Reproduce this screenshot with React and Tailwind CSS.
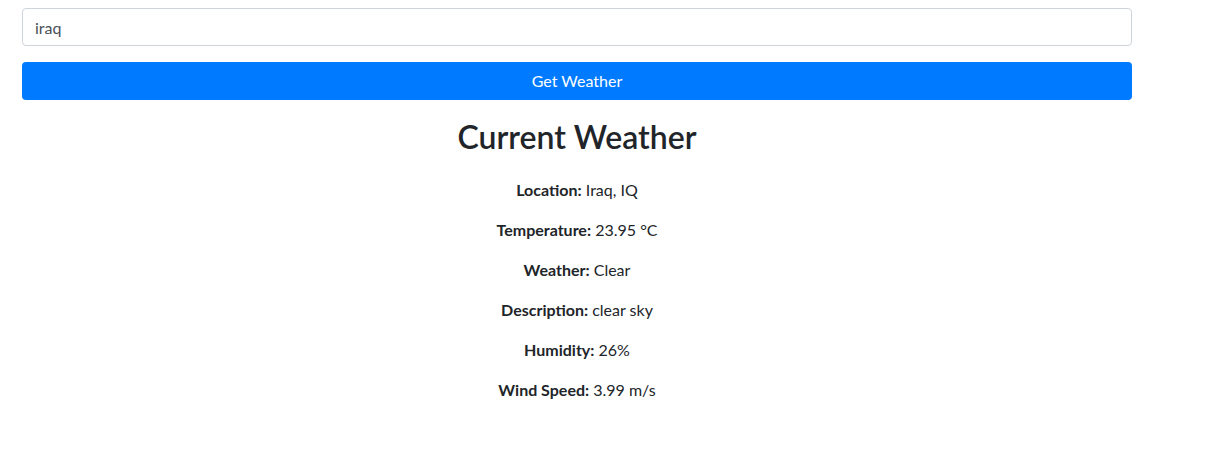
import React from 'react';

const rows = [
  ['Location:', 'Iraq, IQ'],
  ['Temperature:', '23.95 °C'],
  ['Weather:', 'Clear'],
  ['Description:', 'clear sky'],
  ['Humidity:', '26%'],
  ['Wind Speed:', '3.99 m/s'],
];

const App = () => {
  return (
    <div className="min-h-[467px] bg-white text-[#212529] font-['Lato',sans-serif]">
      <div className="ml-[22px] w-[1110px] pt-2">
        <input
          defaultValue="iraq"
          className="block h-[38px] w-full rounded border border-[#ced4da] px-3 text-base text-[#495057] outline-none"
        />
        <button className="mt-4 block h-[38px] w-full rounded bg-[#007bff] text-base text-white">
          Get Weather
        </button>
        <div className="mt-[18px] text-center">
          <h2 className="h-[38px] text-[32px] leading-[38px] font-semibold">Current Weather</h2>
          <div className="mt-[22px]">
            {rows.map(([label, value]) => (
              <p key={label} className="mb-4 text-base leading-6">
                <strong className="font-bold">{label}</strong> {value}
              </p>
            ))}
          </div>
        </div>
      </div>
    </div>
  );
};

export default App;
